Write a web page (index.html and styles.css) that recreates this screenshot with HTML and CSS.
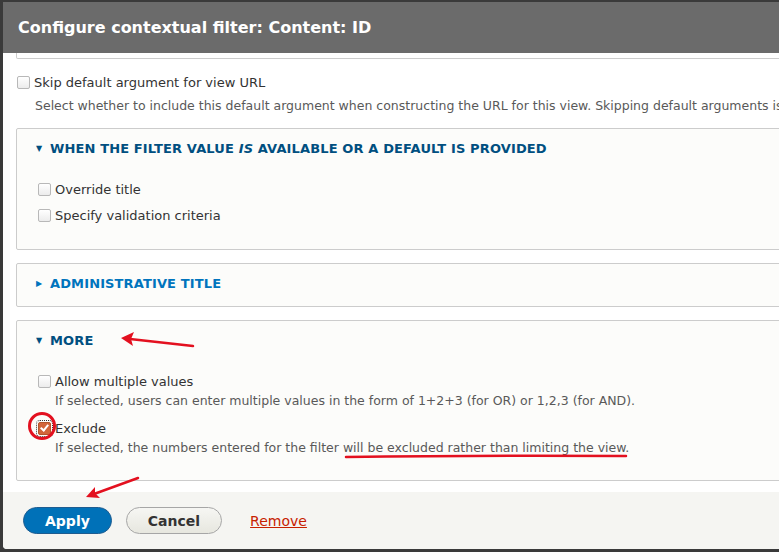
FILE: index.html
```html
<!DOCTYPE html>
<html lang="en">
<head>
  <meta charset="UTF-8">
  <title>Configure contextual filter</title>
  <link rel="stylesheet" href="styles.css">
</head>
<body>

  <div class="dialog">
    <div class="dialog-title">Configure contextual filter: Content: ID</div>

    <div class="dialog-content">
      <div class="prev-fieldset"></div>

      <div class="form-item top-item">
        <label class="option"><span class="checkbox"></span>Skip default argument for view URL</label>
        <div class="description">Select whether to include this default argument when constructing the URL for this view. Skipping default arguments is</div>
      </div>

      <!-- When the filter value IS available -->
      <div class="fieldset">
        <div class="summary open"><span class="arrow">&#9660;</span>When the filter value <em>is</em> available or a default is provided</div>
        <div class="fieldset-body">
          <div class="form-item tight">
            <label class="option"><span class="checkbox"></span>Override title</label>
          </div>
          <div class="form-item tight">
            <label class="option"><span class="checkbox"></span>Specify validation criteria</label>
          </div>
        </div>
      </div>

      <div class="fieldset">
        <div class="summary closed"><span class="arrow">&#9654;</span>Administrative title</div>
      </div>

      <!-- More -->
      <div class="fieldset">
        <div class="summary open"><span class="arrow">&#9660;</span>More</div>
        <div class="fieldset-body">
          <div class="form-item">
            <label class="option"><span class="checkbox"></span>Allow multiple values</label>
            <div class="description">If selected, users can enter multiple values in the form of 1+2+3 (for OR) or 1,2,3 (for AND).</div>
          </div>
          <div class="form-item">
            <label class="option"><span class="checkbox checked"></span>Exclude</label>
            <div class="description">If selected, the numbers entered for the filter will be excluded rather than limiting the view.</div>
          </div>
        </div>
      </div>
    </div>

    <div class="dialog-buttons">
      <button class="button primary">Apply</button>
      <button class="button">Cancel</button>
      <a href="#" class="remove-link">Remove</a>
    </div>
  </div>

  <!-- annotations drawn on the screenshot -->
  <svg class="annotations" width="779" height="552" viewBox="0 0 779 552">
    <g stroke="#e3101f" fill="none" stroke-linecap="round">
      <line x1="193" y1="346" x2="130" y2="339" stroke-width="2.5"/>
      <circle cx="42" cy="426" r="12.5" stroke-width="3"/>
      <path d="M346 457 Q480 455 626 456" stroke-width="2.5"/>
      <line x1="138" y1="478" x2="94" y2="494" stroke-width="2.5"/>
    </g>
    <g fill="#e3101f">
      <polygon points="121,338 134,332 131,339 133,346"/>
      <polygon points="86,497 95,487 95,493 100,498"/>
    </g>
  </svg>

</body>
</html>
```

FILE: styles.css
```css
html, body {
  margin: 0;
  height: 100%;
}

body {
  background: #3a3a3a;
  font-family: "DejaVu Sans", sans-serif;
  color: #333;
  overflow: hidden;
  position: relative;
}

.dialog {
  margin: 2px 0 0 3px;
  width: 820px;
  height: 547px;
  background: #fff;
  border-radius: 0 0 0 4px;
  display: flex;
  flex-direction: column;
  overflow: hidden;
}

.dialog-title {
  background: #6b6b6b;
  color: #fff;
  font-weight: bold;
  font-size: 16px;
  height: 51px;
  line-height: 51px;
  padding-left: 15px;
  flex-shrink: 0;
}

.dialog-content {
  flex: 1;
  padding: 0 13px;
  overflow: hidden;
}

.prev-fieldset {
  height: 5px;
  border: 1px solid #ccc;
  border-top: none;
  border-radius: 0 0 2px 2px;
}

.form-item {
  margin-bottom: 11px;
}

.form-item.tight {
  margin-bottom: 8px;
}

.top-item {
  margin: 15px 0 14px 0;
}

label.option {
  display: flex;
  align-items: center;
  font-size: 13px;
  line-height: 18px;
  white-space: nowrap;
}

.checkbox {
  display: inline-block;
  width: 11px;
  height: 11px;
  border: 1px solid #b8b8b8;
  border-radius: 2px;
  background: linear-gradient(#fff, #ececec);
  margin: 0 4px 2px 1px;
  position: relative;
  flex-shrink: 0;
}

.checkbox.checked {
  background: #d2653a;
  border-color: #b5552b;
  outline: 1px dotted #333;
  outline-offset: 1px;
}

.checkbox.checked::after {
  content: "";
  position: absolute;
  left: 3px;
  top: 0;
  width: 3px;
  height: 6px;
  border: solid #fff;
  border-width: 0 2px 2px 0;
  transform: rotate(40deg);
}

.description {
  font-size: 12.5px;
  color: #595959;
  line-height: 16px;
  margin: 2px 0 0 18px;
  white-space: nowrap;
}

.top-item .description {
  margin-top: 6px;
  margin-left: 19px;
}

.fieldset {
  background: #fcfcfa;
  border: 1px solid #ccc;
  border-radius: 2px;
  margin-bottom: 13px;
}

.summary {
  font-size: 13px;
  font-weight: bold;
  text-transform: uppercase;
  letter-spacing: 0.01em;
  padding: 11px 20px 13px 19px;
  line-height: 18px;
  white-space: nowrap;
}

.summary.open {
  color: #004f80;
}

.summary.closed {
  color: #0074bd;
}

.summary .arrow {
  display: inline-block;
  font-size: 8px;
  width: 14px;
  vertical-align: 2px;
  letter-spacing: 0;
}

.fieldset-body {
  padding: 10px 20px 24px 20px;
}

.fieldset-body .form-item:last-child {
  margin-bottom: 0;
}

.dialog-buttons {
  background: #f5f5f2;
  height: 57px;
  display: flex;
  align-items: center;
  padding: 0 20px;
  flex-shrink: 0;
}

.button {
  font-family: "DejaVu Sans", sans-serif;
  font-size: 14px;
  font-weight: bold;
  height: 27px;
  padding: 0 21px;
  border-radius: 14px;
  border: 1px solid #a6a6a6;
  background: linear-gradient(#f6f6f3, #e7e7df);
  color: #333;
  margin-right: 14px;
  cursor: pointer;
}

.button.primary {
  background: #0071b8;
  border-color: #1e5c90;
  color: #fff;
}

.remove-link {
  color: #c72100;
  font-size: 14px;
  margin-left: 14px;
}

.annotations {
  position: absolute;
  left: 0;
  top: 0;
  pointer-events: none;
}
```
